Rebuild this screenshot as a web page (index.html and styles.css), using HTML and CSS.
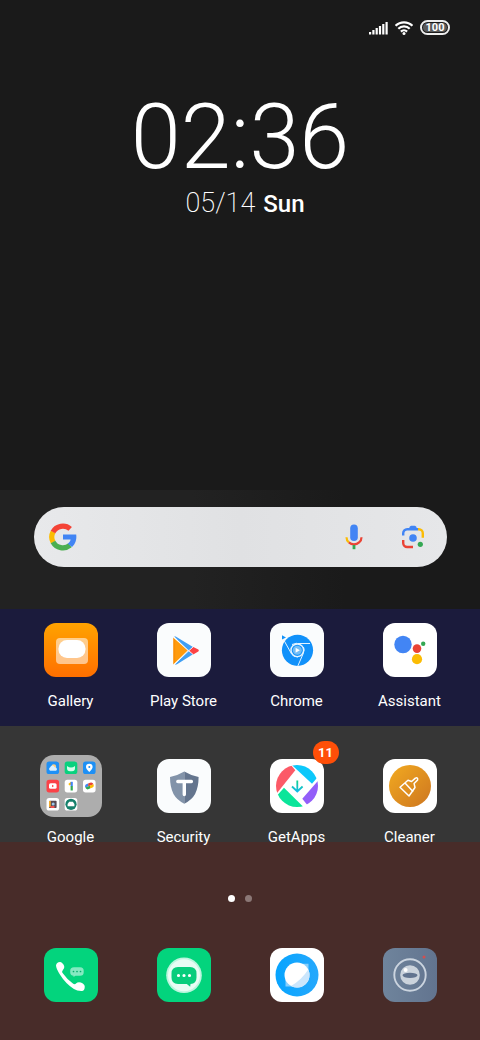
FILE: index.html
```html
<!DOCTYPE html>
<html lang="en">
<head>
  <meta charset="UTF-8">
  <meta name="viewport" content="width=device-width, initial-scale=1.0">
  <title>Home screen</title>
  <link rel="stylesheet" href="styles.css">
</head>
<body>
  <header class="top">
    <div class="status">
      <svg width="19" height="14" viewBox="0 0 19 14" fill="#fff" role="img" aria-label="Signal">
        <path d="M0 11h2.200v2.500H0zM3.300 9h2.200v4.500H3.300zM6.600 7h2.200v6.500H6.600zM9.900 5h2.200v8.500H9.900zM13.200 3h2.200v10.500h-2.200zM16.500 1h2.200v12.500h-2.200z"/>
      </svg>
      <svg width="18" height="14" viewBox="0 0 18 14" fill="none" stroke="#fff" stroke-width="2.200" role="img" aria-label="Wi-Fi">
        <path d="M.6 4.800a12 12 0 0 1 16.800 0M3.300 7.800a8 8 0 0 1 11.400 0M5.900 10.600a4.400 4.400 0 0 1 6.200 0"/>
        <circle cx="9" cy="12.400" r="1.500" fill="#fff" stroke="none"/>
      </svg>
      <span class="battery"><span class="battery-level">100</span></span>
    </div>
    <time class="clock">02:36</time>
    <p class="date"><span class="date-day">05/14</span><strong>Sun</strong></p>
  </header>

  <main>
    <section class="search-area">
      <form class="search">
        <svg width="28" height="28" viewBox="0 0 28 28" fill="none" stroke-width="5.200" aria-hidden="true">
          <path stroke="#fbbc04" d="M4.150 8.700A11 11 0 0 0 4.150 19.300"/>
          <path stroke="#f44336" d="M4 9A11.200 11.200 0 0 1 21.200 5.900"/>
          <path stroke="#4caf50" d="M4 19A11.200 11.200 0 0 0 21 22.300"/>
          <path fill="#4285f4" d="M14 11.500h13.200c.7 5-.8 9.500-4.200 12.600l-4.200-3.300c1.600-1.100 2.500-2.600 2.800-4.200H14z"/>
        </svg>
        <input class="search-input" type="text" aria-label="Search">
        <button class="search-button" type="button" aria-label="Voice search">
          <svg width="28" height="28" viewBox="0 0 28 28" fill="none" stroke-width="2.200">
            <rect x="10.200" y="1.600" width="7.600" height="16.400" rx="3.800" fill="#4285f4"/>
            <path stroke="#fbbc04" d="M6.500 14.200c0 2 .9 3.900 2.400 5.200"/>
            <path stroke="#ea4335" d="M8.900 19.400c2.800 2.600 7.400 2.600 10.200 0 1.600-1.300 2.400-3.200 2.400-5.200"/>
            <path stroke="#34a853" stroke-width="2.800" d="M14 22v4.200"/>
          </svg>
        </button>
        <button class="search-button" type="button" aria-label="Search with camera">
          <svg width="28" height="28" viewBox="0 0 28 28" fill="none" stroke-width="2.400">
            <path stroke="#4285f4" d="M4.200 12.600V10.200a4 4 0 0 1 4-4H19"/>
            <path fill="#4285f4" d="M9.300 6.500l1.700-3q.5-.7 1.300-.7h3.400q.8 0 1.300.7l1.700 3z"/>
            <path stroke="#fbbc04" d="M19 6.200h.8a4 4 0 0 1 4 4v4.600"/>
            <path stroke="#ea4335" d="M4.200 17v3a4 4 0 0 0 4 4H14"/>
            <circle cx="14" cy="15" r="3.800" fill="#4285f4"/>
            <circle cx="21.300" cy="21.300" r="2.600" fill="#34a853"/>
          </svg>
        </button>
      </form>
    </section>

    <section class="apps apps-first">
      <button class="app" type="button">
        <svg class="icon" viewBox="0 0 54 54" aria-hidden="true">
          <defs><linearGradient id="gallery" x2="0" y2="1"><stop stop-color="#ffa300"/><stop offset="1" stop-color="#ff6f00"/></linearGradient></defs>
          <rect width="54" height="54" rx="12" fill="url(#gallery)"/>
          <rect x="12" y="15" width="32" height="26" rx="4" fill="#fff" opacity=".55"/>
          <rect x="14.500" y="17" width="27" height="18" rx="8.500" fill="#fff"/>
        </svg>
        <span class="label">Gallery</span>
      </button>
      <button class="app" type="button">
        <svg class="icon" viewBox="0 0 54 54" aria-hidden="true">
          <rect width="54" height="54" rx="12" fill="#fafcfd"/>
          <path fill="#409ff3" d="M17.300 13.500q.5-.5 1.800.3L36 24l-4.700 3.700zM18 41.500L31.200 28 36 31.300 20 41.200q-1.400.7-2 .3z"/>
          <path fill="#ff9b0d" d="M16.300 14.500L30.600 27.500 16.300 41.400z"/>
          <path fill="#f98600" d="M16.300 15l1.800 1.500v22.800l-1.800 1.700z" opacity=".5"/>
          <path fill="#fc4245" d="M31.700 27.700l4.600-3.800 5 2.700q1.200.9 0 1.900l-5.100 3z"/>
          <path d="M17 14.500l19.500 17.300M36.500 23.500L17 41.500" fill="none" stroke="#fff" stroke-width=".7"/>
        </svg>
        <span class="label">Play Store</span>
      </button>
      <button class="app" type="button">
        <svg class="icon" viewBox="0 0 54 54" aria-hidden="true">
          <rect width="54" height="54" rx="12" fill="#fafcfd"/>
          <circle cx="27.500" cy="27.300" r="15.600" fill="#1191fa"/>
          <path fill="#1191fa" d="M12 12.300l4 2.100-4 2.200z"/>
          <g fill="none" stroke="#e5f4ff" stroke-width="1">
            <circle cx="27.300" cy="27.300" r="6.300" stroke-width="1.400"/>
            <path d="M27.300 20.500H40M33.200 30.600L27.800 43M21.600 31L13.500 16.500M22 21.500l5-1.300M33.500 24q1.300 3-.3 6.600M28 34q-4.500.1-6.400-3"/>
          </g>
          <circle cx="27.300" cy="27.300" r="4.500" fill="#72bdf6"/>
          <path fill="#fff" d="M25.600 24.800l4.300 2.500-4.300 2.500z"/>
        </svg>
        <span class="label">Chrome</span>
      </button>
      <button class="app" type="button">
        <svg class="icon" viewBox="0 0 54 54" aria-hidden="true">
          <rect width="54" height="54" rx="12" fill="#fff"/>
          <circle cx="20" cy="21.500" r="8.700" fill="#4285f4"/>
          <circle cx="34" cy="25.600" r="4.300" fill="#ea4335"/>
          <circle cx="34" cy="36.200" r="5.100" fill="#fbbc04"/>
          <circle cx="40.200" cy="20.700" r="2.200" fill="#34a853"/>
        </svg>
        <span class="label">Assistant</span>
      </button>
    </section>

    <section class="apps apps-second">
      <button class="app" type="button">
        <svg class="icon folder" viewBox="0 0 62 62" aria-hidden="true">
          <rect width="62" height="62" rx="14" fill="#adadad"/>
          <rect x="6.500" y="6.500" width="12.600" height="12.600" rx="2.600" fill="#1e90f5"/>
          <circle cx="13.800" cy="11.500" r="2.300" fill="#ffd083"/>
          <path fill="#d9efff" d="M10.200 15.800a2 2 0 0 1 0-3.600 2.300 2.300 0 0 1 4.400 0 2 2 0 0 1 1.500 3.600z"/>
          <rect x="24.700" y="6.500" width="12.600" height="12.600" rx="2.600" fill="#09d17e"/>
          <path fill="#d4ffec" d="M27 11q4 3 8 0v2.300q0 3-3 3h-2q-3 0-3-3z"/>
          <rect x="43" y="6.500" width="12.600" height="12.600" rx="2.600" fill="#1e90f5"/>
          <path fill="#fff" d="M49.300 17q-3.300-3.200-3.300-5a3.300 3.300 0 0 1 6.600 0q0 1.800-3.300 5z"/>
          <circle cx="49.300" cy="12" r="1" fill="#1e90f5"/>
          <rect x="6.500" y="24.800" width="12.600" height="12.600" rx="2.600" fill="#fb4248"/>
          <rect x="9" y="28.200" width="7.600" height="5.600" rx="1.600" fill="#fff"/>
          <path fill="#fb4248" d="M12 29.700l2 1.300-2 1.300z"/>
          <rect x="24.700" y="24.800" width="12.600" height="12.600" rx="2.600" fill="#fff"/>
          <path fill="#fbbc04" d="M28.300 29l2.700-2.200.8 2.200-2.300 1.600z"/>
          <path fill="#4285f4" d="M30.600 26.800h2.200v4.400h-2.200z"/>
          <path fill="#34a853" d="M30.600 31h2.200v4.500h-2.200z"/>
          <rect x="43" y="24.800" width="12.600" height="12.600" rx="2.600" fill="#fff"/>
          <g transform="rotate(-22 49.300 31)">
            <path fill="#4285f4" d="M45 31a2.700 2.700 0 0 1 2.700-2.700h2L48 31z"/>
            <path fill="#ea4335" d="M49.300 28.300h1.800a2.700 2.700 0 0 1 2.700 2.700H48z"/>
            <path fill="#fbbc04" d="M49 31h4.800a2.700 2.700 0 0 1-2.700 2.700H49z"/>
            <path fill="#34a853" d="M45 31h5l-1 2.700h-1.300A2.700 2.700 0 0 1 45 31z"/>
          </g>
          <rect x="6.500" y="43" width="12.600" height="12.600" rx="2.600" fill="#fff"/>
          <rect x="9" y="45.700" width="7.600" height="7.400" rx=".8" fill="#594a54"/>
          <path fill="#f3aa30" d="M9 46h1.800v6H9z"/>
          <path fill="#ef5350" d="M10.500 51h4v2h-4z"/>
          <circle cx="13.200" cy="49" r="1.500" fill="#9dc8e8"/>
          <rect x="24.700" y="43" width="12.600" height="12.600" rx="2.600" fill="#fff"/>
          <circle cx="31" cy="49.300" r="5.600" fill="#15806b"/>
          <path fill="#fff" d="M27.600 49l1.600-2.300h3.600l1.600 2.300v2.200h-6.800z"/>
        </svg>
        <span class="label">Google</span>
      </button>
      <button class="app" type="button">
        <svg class="icon" viewBox="0 0 54 54" aria-hidden="true">
          <rect width="54" height="54" rx="12" fill="#fafcfd"/>
          <path fill="#8293a9" d="M27.300 12.500q-7 4.200-14.300 5.500 0 10 3.500 17 3.300 6 10.800 9.700z"/>
          <path fill="#64758e" d="M27.300 12.500q7 4.200 14.300 5.500 0 10-3.500 17-3.300 6-10.800 9.700z"/>
          <path d="M20.800 22.500h13.600M27.300 23v12.500" fill="none" stroke="#fff" stroke-width="3.400" stroke-linecap="round"/>
        </svg>
        <span class="label">Security</span>
      </button>
      <button class="app" type="button">
        <svg class="icon" viewBox="0 0 54 54" aria-hidden="true">
          <defs>
            <clipPath id="round"><circle cx="27" cy="27" r="21"/></clipPath>
            <linearGradient id="arrow" gradientUnits="userSpaceOnUse" x1="0" y1="21" x2="0" y2="33"><stop stop-color="#13d487"/><stop offset="1" stop-color="#12b9ec"/></linearGradient>
          </defs>
          <rect width="54" height="54" rx="12" fill="#fff"/>
          <g clip-path="url(#round)">
            <path fill="#fc5a67" d="M20.500 5.500L25.300 11.300 6.900 34.300 4 34V5z"/>
            <path fill="#0cc8fb" d="M21.300 5.500L42 24.700 49 16.500V4H21z"/>
            <path fill="#935ef9" d="M49 20.500L32.300 39.700 38.500 47.500 49 49z"/>
            <path fill="#0be59a" d="M8.200 35.300L14 28.700 34.500 49H5z"/>
          </g>
          <path d="M27.300 21.500V32M22 27.500l5.300 5 5.300-5" fill="none" stroke="url(#arrow)" stroke-width="1.800"/>
        </svg>
        <span class="badge">11</span>
        <span class="label">GetApps</span>
      </button>
      <button class="app" type="button">
        <svg class="icon" viewBox="0 0 54 54" aria-hidden="true">
          <defs><linearGradient id="cleaner" x2="1" y2="1"><stop stop-color="#f2aa20"/><stop offset="1" stop-color="#cd7620"/></linearGradient></defs>
          <rect width="54" height="54" rx="12" fill="#fff"/>
          <circle cx="27" cy="27" r="21" fill="url(#cleaner)"/>
          <path d="M17 28.200l8-6.900 3.600 1.200 3.800-3.400q2.700-1 2.200 1.800l-3.500 3.700.9 3.900-6 8.500zM22 23.900l8.200 8.800" fill="none" stroke="#fff" stroke-width="1.500" stroke-linejoin="round"/>
        </svg>
        <span class="label">Cleaner</span>
      </button>
    </section>
  </main>

  <footer class="bottom">
    <div class="pages">
      <span class="page current"></span>
      <span class="page"></span>
    </div>
    <nav class="dock">
      <button class="app" type="button" aria-label="Phone">
        <svg class="icon" viewBox="0 0 54 54">
          <rect width="54" height="54" rx="12" fill="#03d47d"/>
          <path fill="#fff" d="M12 17.500q.5-3.500 4-3.500 2.500.3 4.200 4 .8 2.500-1.700 4.700-.8.800-.1 2.100 4.500 6.500 10.800 11 1.800.9 2.800-.2 1.900-2 4.900-1 4.500 2 3.800 5-.3 3.700-3.300 3.300-4.500-.2-7.500-2-8.500-5.500-14-14.500-3.700-5.500-3.900-8.900z"/>
          <path fill="#85e9c1" d="M30 19.200h6.200q3.500 0 3.500 3.500v1.500q0 3.500-3.500 3.500h-4.700l-2 1.200v-1.200q-3.300-.4-3.300-3.500v-1.500q0-3.500 3.800-3.500z"/>
          <path d="M29.500 23.500h.01M33 23.500h.01M36.500 23.500h.01" stroke="#08ac6c" stroke-width="1.700" stroke-linecap="round"/>
        </svg>
      </button>
      <button class="app" type="button" aria-label="Messages">
        <svg class="icon" viewBox="0 0 54 54">
          <rect width="54" height="54" rx="12" fill="#03d47d"/>
          <circle cx="27" cy="27.300" r="17.800" fill="#bdf5df"/>
          <circle cx="27" cy="27.300" r="16" fill="#e9fcf4"/>
          <path fill="#08cd7c" d="M21 19h12q6.500 0 6.500 6.500v4q0 6-6 6.500l-.3 2.700-3.400-2.700H21q-6.500 0-6.500-6.500v-4Q14.500 19 21 19z"/>
          <path d="M21.500 27.500h.01M27 27.500h.01M32.500 27.500h.01" stroke="#fff" stroke-width="3.200" stroke-linecap="round"/>
        </svg>
      </button>
      <button class="app" type="button" aria-label="Browser">
        <svg class="icon" viewBox="0 0 54 54">
          <defs><linearGradient id="browser" x2="1" y2="0"><stop stop-color="#06a4ff"/><stop offset="1" stop-color="#26a8fc"/></linearGradient></defs>
          <rect width="54" height="54" rx="12" fill="#fff"/>
          <circle cx="27" cy="27" r="21.500" fill="url(#browser)"/>
          <path fill="#88cffc" d="M31 15.700h7.500v6L22 38.600h-6.500v-6z"/>
          <circle cx="27" cy="27" r="12.500" fill="#fff"/>
          <path fill="#cbe6fc" d="M38.300 21.500A12.500 12.500 0 0 1 21 38q10.500-6 17.300-16.500z"/>
        </svg>
      </button>
      <button class="app" type="button" aria-label="Camera">
        <svg class="icon" viewBox="0 0 54 54">
          <defs><linearGradient id="camera" x2="1" y2="0"><stop stop-color="#6f849c"/><stop offset="1" stop-color="#62748f"/></linearGradient></defs>
          <rect width="54" height="54" rx="12" fill="url(#camera)"/>
          <circle cx="27" cy="27" r="15.700" fill="none" stroke="#cbd4df" stroke-width="1.900"/>
          <circle cx="27" cy="27" r="9.800" fill="#cbd3dc"/>
          <ellipse cx="27" cy="27.300" rx="7.500" ry="2.600" fill="#62748f"/>
          <circle cx="22.600" cy="22" r="2" fill="#fff"/>
          <circle cx="41" cy="9" r="1.500" fill="#d44e4e"/>
        </svg>
      </button>
    </nav>
  </footer>
</body>
</html>
```
FILE: styles.css
```css
* {
  box-sizing: border-box;
}
body {
  margin: 0;
  min-height: 100vh;
  display: flex;
  flex-direction: column;
  background: #482c29;
  color: #fff;
  font-family: Roboto, "Liberation Sans", sans-serif;
}
button {
  border: 0;
  padding: 0;
  background: none;
  color: inherit;
  font: inherit;
}
svg {
  display: block;
}

.top {
  display: flex;
  flex-direction: column;
  align-items: center;
  padding: 20px 30px 272px;
  background: #1a1a1a;
}
.status {
  display: flex;
  align-items: center;
  align-self: flex-end;
  gap: 7px;
}
.battery {
  padding: 1px;
  border: 2px solid #eee;
  border-radius: 8px;
}
.battery-level {
  display: block;
  width: 24px;
  border-radius: 5px;
  background: #5a5a5a;
  font-size: 11px;
  font-weight: 700;
  line-height: 9px;
  text-align: center;
}
.clock {
  margin-top: 51px;
  font-size: 90px;
  font-weight: 300;
  line-height: 104px;
}
.date {
  display: flex;
  align-items: baseline;
  gap: 8px;
  margin: 0;
  padding-left: 10px;
  font-size: 24px;
  line-height: 27px;
}
.date-day {
  font-size: 27px;
  font-weight: 200;
}
.date strong {
  font-weight: 500;
}

.search-area {
  padding: 17px 33px 42px 34px;
  background: linear-gradient(to right, #222 40%, #1a1a1a 72%);
}
.search {
  display: flex;
  align-items: center;
  height: 60px;
  padding: 0 20px 0 15px;
  border-radius: 30px;
  background: linear-gradient(to right, #e8e9eb, #e0e1e3 50%, #e6e7e9);
}
.search-input {
  flex: 1;
  min-width: 0;
  height: 40px;
  border: 0;
  outline: 0;
  background: none;
  font-size: 16px;
}
.search-button + .search-button {
  margin-left: 31px;
}

.apps, .dock {
  display: grid;
  grid-template-columns: repeat(4, 1fr);
  padding: 0 14px;
}
.apps-first {
  padding-top: 14px;
  padding-bottom: 15px;
  background: #1b1b3c;
}
.apps-second {
  padding-top: 33px;
  background: #363636;
}
.app {
  position: relative;
  z-index: 1;
  display: flex;
  flex-direction: column;
  align-items: center;
}
/* the last row of labels hangs over the bottom band */
.apps-second .app {
  margin-bottom: -5px;
}
.icon {
  width: 54px;
  height: 54px;
}
.folder {
  width: 62px;
  height: 62px;
  margin: -4px;
}
.label {
  margin-top: 14px;
  font-size: 15px;
  line-height: 20px;
}
.badge {
  position: absolute;
  top: -18px;
  left: 50%;
  width: 26px;
  margin-left: 16px;
  border-radius: 12px;
  background: #ff4f08;
  font-size: 13px;
  font-weight: 700;
  line-height: 23px;
}

.bottom {
  flex: 1;
  padding: 53px 0 38px;
}
.pages {
  display: flex;
  justify-content: center;
  gap: 10px;
  margin-bottom: 46px;
}
.page {
  width: 7px;
  height: 7px;
  border-radius: 50%;
  background: #8b7876;
}
.page.current {
  background: #fff;
}
```
